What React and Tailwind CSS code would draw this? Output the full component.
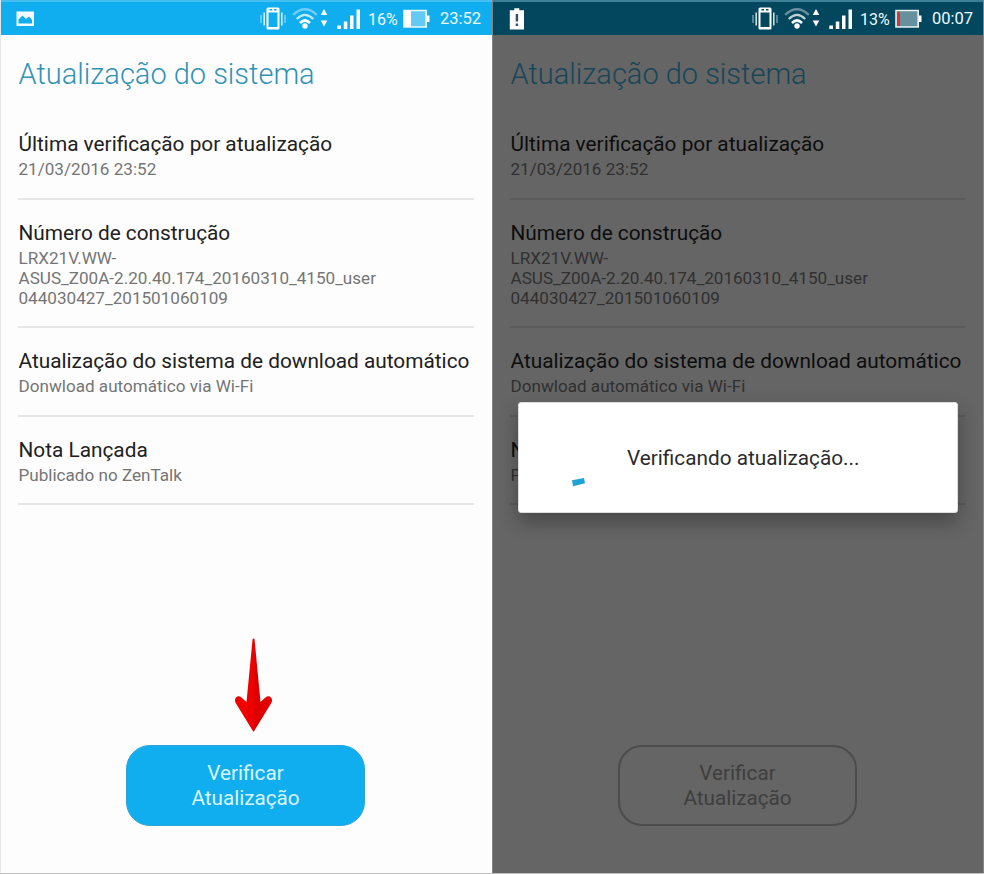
import React from "react";

const items = [
  { title: "Última verificação por atualização", lines: ["21/03/2016 23:52"] },
  {
    title: "Número de construção",
    lines: ["LRX21V.WW-", "ASUS_Z00A-2.20.40.174_20160310_4150_user", "044030427_201501060109"],
  },
  { title: "Atualização do sistema de download automático", lines: ["Donwload automático via Wi-Fi"] },
  { title: "Nota Lançada", lines: ["Publicado no ZenTalk"] },
];

function PictureIcon() {
  return (
    <svg className="ml-[15px] block" width="18" height="16" viewBox="0 0 18 16">
      <path fill="#f2fcff" fillRule="evenodd" d="M0.5 0.5H18V15H0.5ZM2.5 12.500H16V9L13 5.5L10 8L6.5 4.5L2.5 8.5Z" />
    </svg>
  );
}

function LowBatteryIcon() {
  return (
    <svg className="ml-[16px] block" width="16" height="22" viewBox="0 0 16 22">
      <path fill="#fff" d="M5.300 0.3H10.300V2.3H15V21.5H0.800V2.3H5.300Z" />
      <path fill="#35505a" d="M6.700 6H9.100V13.5H6.700ZM6.700 15.5H9.100V18H6.700Z" />
    </svg>
  );
}

function VibrateIcon() {
  return (
    <svg className="block" width="26" height="23" viewBox="0 0 26 23">
      <path fill="#fff" fillRule="evenodd" d="M8 0.5H18Q19.5 0.5 19.5 2V21Q19.5 22.5 18 22.5H8Q6.500 22.5 6.500 21V2Q6.500 0.500 8 0.500ZM8.500 5.500V20H17.500V5.500ZM9.500 2V3.500H12V2ZM14 2V3.500H16.500V2Z" />
      <g stroke="#fff">
        <path strokeWidth="1.6" opacity=".8" d="M4.200 5.500V18.500M21.800 5.500V18.500" />
        <path strokeWidth="1.5" opacity=".45" d="M1 8V16M25 8V16" />
      </g>
    </svg>
  );
}

function WifiIcon() {
  return (
    <svg className="ml-[6px] block" width="38" height="23" viewBox="0 0 38 23">
      <g fill="none" stroke="#fff" strokeWidth="2.300">
        <path opacity=".4" d="M1.200 7.800Q13 -3.200 24.800 7.800" />
        <path opacity=".75" d="M4.800 12Q13 3.800 21.200 12" />
        <path strokeWidth="2.600" d="M8 16Q13 11 18 16" />
      </g>
      <circle cx="13" cy="19" r="2.700" fill="#fff" />
      <path fill="#fff" d="M32 2L35.300 8H28.700ZM32 19.500L35.300 13.500H28.700Z" />
    </svg>
  );
}

function SignalIcon() {
  return (
    <svg className="ml-[7px] block" width="24" height="21" viewBox="0 0 24 21">
      <path fill="#fff" d="M0.300 17.500H4V21H0.300ZM6.800 13.500H10.300V21H6.800ZM13 7.500H16.500V21H13ZM19.500 1.500H23V21H19.500Z" />
    </svg>
  );
}

function BatteryIcon({ low }) {
  return (
    <svg className="block" width="27" height="20" viewBox="0 0 27 20">
      <path fill="#fff" opacity={low ? 0.4 : 0.35} d="M1 1.500H23V18H1Z" />
      {low ? <path fill="#d83434" d="M2 2.500H5V17H2Z" /> : <path fill="#fff" d="M1 1.500H8V18H1Z" />}
      <path fill="none" stroke="#fff" strokeWidth="1.600" opacity=".9" d="M1 1.500H23.200V18H1Z" />
      <path fill="#fff" d="M24 6.500H26.500V13H24Z" />
    </svg>
  );
}

function StatusBar({ low, percent, time }) {
  return (
    <header className={`flex h-[35px] items-center border-t-2 text-[17px] leading-none text-[#edfaff] ${low ? "border-[#3d7f96] bg-[#03475f]" : "border-[#43c0f0] bg-[#10aeee]"}`}>
      {low ? <LowBatteryIcon /> : <PictureIcon />}
      <div className={`ml-auto flex items-center ${low ? "pr-[10px]" : "pr-[11px]"}`}>
        <VibrateIcon />
        <WifiIcon />
        <SignalIcon />
        <span className="ml-[7px] w-[35px] pt-[2px] text-[16px] whitespace-nowrap">{percent}</span>
        <BatteryIcon low={low} />
        <span className="ml-[10px] w-[41px] pt-[2px] text-[16.500px] whitespace-nowrap">{time}</span>
      </div>
    </header>
  );
}

function Phone({ dimmed, percent, time }) {
  return (
    <section className={`flex h-full w-[492px] flex-col border-l ${dimmed ? "border-r border-r-[#858585] border-l-[#858585] bg-[#656565]" : "border-[#e6e6e6] bg-[#fdfdfd]"}`}>
      <StatusBar low={dimmed} percent={percent} time={time} />
      <h1 className={`h-[76.500px] pt-[20px] pl-[17.500px] text-[29px] leading-[38px] font-light whitespace-nowrap ${dimmed ? "text-[#164658]" : "text-[#3292b5]"}`}>
        Atualização do sistema
      </h1>
      <ul className={`ml-[17px] ${dimmed ? "mr-[17px]" : "mr-[18px]"}`}>
        {items.map((item) => (
          <li key={item.title} className={`border-b-2 pt-[17.700px] pb-[18.800px] pl-[0.500px] ${dimmed ? "border-[#5b5b5b]" : "border-[#e6e6e6]"}`}>
            <h2 className={`h-[30px] text-[20.800px] leading-[30px] whitespace-nowrap ${dimmed ? "text-[#0d0d0d]" : "text-[#212121]"}`}>{item.title}</h2>
            {item.lines.map((line) => (
              <p key={line} className={`h-[20px] text-[17.100px] leading-[20px] whitespace-nowrap ${dimmed ? "text-[#303030]" : "text-[#757575]"}`}>{line}</p>
            ))}
          </li>
        ))}
      </ul>
      <div className="mt-auto mb-[47px] ml-[125px] flex flex-col">
        {!dimmed && (
          <svg className="mb-[13px] ml-[109px] block" width="38" height="94" viewBox="0 0 38 94">
            <defs>
              <linearGradient id="arrow">
                <stop offset="0" stopColor="#f40000" />
                <stop offset=".48" stopColor="#ee0000" />
                <stop offset=".56" stopColor="#da0000" />
                <stop offset="1" stopColor="#e90000" />
              </linearGradient>
            </defs>
            <path fill="url(#arrow)" d="M17.600 1Q18.500 0 19.500 1L25.500 64L30.500 59.500C34 56 39 60 36.300 65L18.500 94L0.700 65C-2 60 3 56 6.500 59.500L11.500 64Z" />
          </svg>
        )}
        <button className={`h-[81px] w-[239px] rounded-[24px] text-[20.700px] leading-[25px] ${dimmed ? "border-2 border-[#4c4c4c] text-[#3e3e3e]" : "border border-[#2ba5da] bg-[#10aeee] text-[#d9f6ff]"}`}>
          Verificar
          <br />
          Atualização
        </button>
      </div>
    </section>
  );
}

export default function App() {
  return (
    <main className="relative flex h-[874px] w-[984px] overflow-hidden border-b border-[#c0c0c0] font-[Roboto,sans-serif]">
      <Phone percent="16%" time="23:52" />
      <Phone dimmed percent="13%" time="00:07" />
      <div role="dialog" className="absolute top-[402px] left-[518px] flex h-[111px] w-[440px] rounded-[3px] border border-[#dedede] bg-white shadow-[0_9px_20px_rgba(0,0,0,0.3)]">
        <svg className="mt-[74px] ml-[52px] block" width="15" height="11" viewBox="0 0 15 11">
          <path fill="#20a2d5" d="M1 3.300L13 1L14 6.300L2 9.300Z" />
        </svg>
        <p className="mt-[40px] ml-[41px] h-[30px] text-[20.750px] leading-[30px] whitespace-nowrap text-[#2b2b2b]">Verificando atualização...</p>
      </div>
    </main>
  );
}
